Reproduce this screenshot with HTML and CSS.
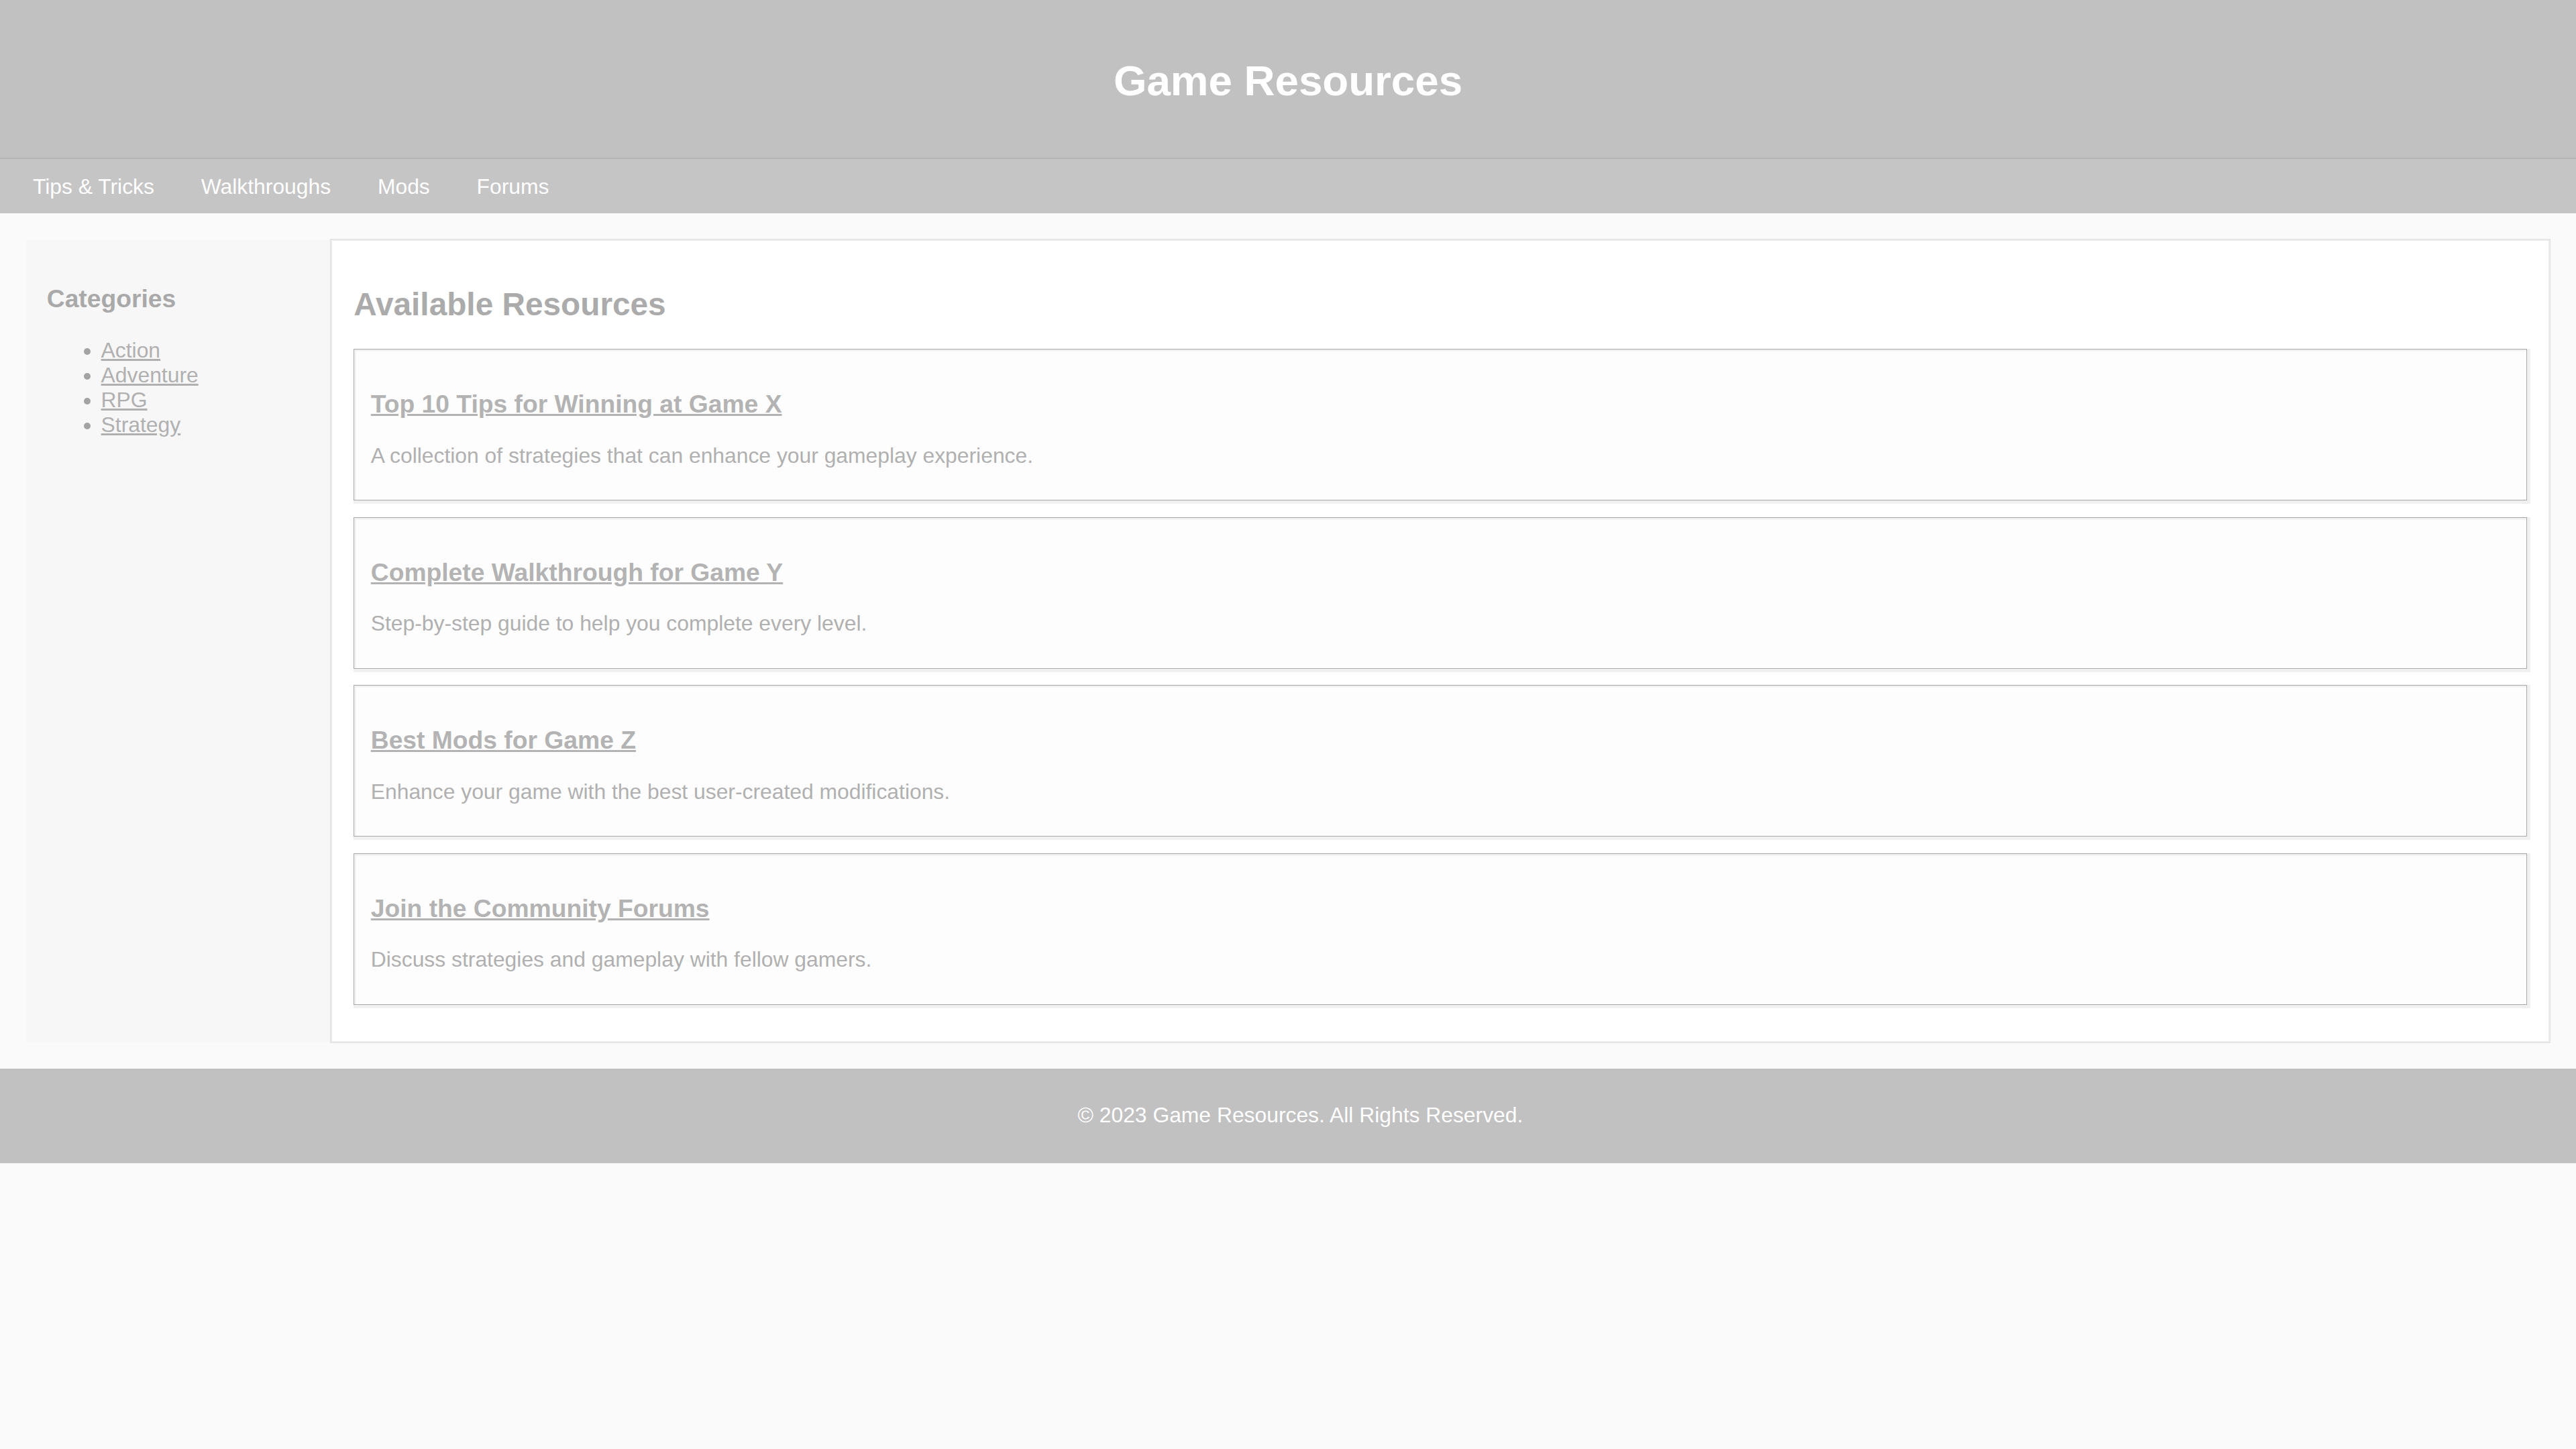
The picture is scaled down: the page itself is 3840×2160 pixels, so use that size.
FILE: index.html
```html
<!DOCTYPE html>
<html lang="en">
<head>
<meta charset="utf-8">
<title>Game Resources</title>
<link rel="stylesheet" href="styles.css">
</head>
<body>
<header class="site-header">
  <h1 class="site-title">Game Resources</h1>
</header>
<nav class="site-nav">
  <a href="#" class="nav-link">Tips &amp; Tricks</a>
  <a href="#" class="nav-link">Walkthroughs</a>
  <a href="#" class="nav-link">Mods</a>
  <a href="#" class="nav-link">Forums</a>
</nav>
<div class="layout">
  <aside class="sidebar">
    <h3 class="sidebar-title">Categories</h3>
    <ul class="category-list">
      <li><a href="#">Action</a></li>
      <li><a href="#">Adventure</a></li>
      <li><a href="#">RPG</a></li>
      <li><a href="#">Strategy</a></li>
    </ul>
  </aside>
  <main class="content">
    <h2 class="content-title">Available Resources</h2>
    <div class="card">
      <h3 class="card-title"><a href="#">Top 10 Tips for Winning at Game X</a></h3>
      <p class="card-text">A collection of strategies that can enhance your gameplay experience.</p>
    </div>
    <div class="card">
      <h3 class="card-title"><a href="#">Complete Walkthrough for Game Y</a></h3>
      <p class="card-text">Step-by-step guide to help you complete every level.</p>
    </div>
    <div class="card">
      <h3 class="card-title"><a href="#">Best Mods for Game Z</a></h3>
      <p class="card-text">Enhance your game with the best user-created modifications.</p>
    </div>
    <div class="card">
      <h3 class="card-title"><a href="#">Join the Community Forums</a></h3>
      <p class="card-text">Discuss strategies and gameplay with fellow gamers.</p>
    </div>
  </main>
</div>
<footer class="site-footer">
  <p class="footer-text">&copy; 2023 Game Resources. All Rights Reserved.</p>
</footer>
</body>
</html>
```
FILE: styles.css
```css
html {
  zoom: 2.449;
}

body {
  margin: 0;
  background: #fafafa;
  font-family: "Liberation Sans", Arial, sans-serif;
  font-size: 13px;
  color: #ababab;
}

.site-header {
  background: #c1c1c1;
  border-bottom: 1px solid #b4b4b4;
  padding: 34px 0 32px;
  text-align: center;
}

.site-title {
  margin: 0;
  font-size: 26px;
  line-height: 30px;
  font-weight: bold;
  color: #ffffff;
}

.site-nav {
  background: #c5c5c5;
  padding: 9px 20px 8px;
  display: flex;
  gap: 28.5px;
  line-height: 16px;
}

.nav-link {
  color: #ffffff;
  text-decoration: none;
  font-size: 13px;
}

.layout {
  display: flex;
  align-items: stretch;
  padding: 16px;
}

.sidebar {
  flex: 0 0 185.5px;
  box-sizing: border-box;
  background: #f7f7f7;
  padding: 12px 12px 12px 12.5px;
}

.sidebar-title {
  margin: 15.2px 0;
  font-size: 15.2px;
  color: #a9a9a9;
}

.category-list {
  margin: 13px 0;
  padding-left: 33px;
  color: #a3a3a3;
}

.category-list a {
  color: #b0b0b0;
  text-decoration: underline;
}

.content {
  flex: 1;
  background: #ffffff;
  border: 1px solid #ececec;
  box-shadow: 0 0 0 0.41px #e0e0e0;
  padding: 11px 13px 12px;
}

.content-title {
  margin: 16.2px 0;
  font-size: 19.5px;
  color: #ababab;
}

.card {
  background: #fdfdfd;
  border: 0.41px solid #a9a9a9;
  box-shadow: inset 1px 1px 0 #f0f0f0, 1px 1px 0 1px #f0f0f0;
  padding: 6.4px 10px;
  margin-bottom: 10px;
}

.card-title {
  margin: 18px 0 15px;
  font-size: 15.21px;
}

.card-title a {
  color: #b3b3b3;
  text-decoration: underline;
}

.card-text {
  margin: 0 0 13px;
  color: #b0b0b0;
}

.site-footer {
  background: #c1c1c1;
  padding: 21px 0 21.5px 15px;
  text-align: center;
}

.footer-text {
  margin: 0;
  line-height: 15px;
  color: #ffffff;
}
```
